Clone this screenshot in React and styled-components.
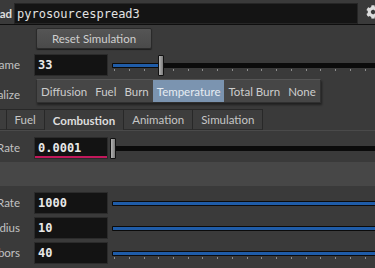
import React from 'react';
import styled, { createGlobalStyle } from 'styled-components';
import { FaCog } from 'react-icons/fa';

const GlobalStyle = createGlobalStyle`
  html, body {
    margin: 0;
    padding: 0;
    background: #3a3a3a;
    overflow: hidden;
  }
  body {
    font-family: Lato, 'Liberation Sans', sans-serif;
    font-size: 11.5px;
    color: #c8c8c8;
  }
`;

const Pane = styled.div`
  width: 375px;
  height: 268px;
  overflow: hidden;
  background: #3a3a3a;
  display: flex;
  flex-direction: column;
`;

const Header = styled.div`
  display: flex;
  align-items: flex-start;
  height: 25px;
  padding-top: 3px;
  box-sizing: border-box;
  border-bottom: 1px solid #0e0e0e;
  flex-shrink: 0;
`;

const Label = styled.div`
  width: ${p => p.$width || 20}px;
  flex-shrink: 0;
  display: flex;
  justify-content: flex-end;
  align-items: center;
  height: 21px;
  overflow: hidden;
  white-space: nowrap;
  color: ${p => (p.$bold ? '#dedede' : '#c2c2c2')};
  font-weight: ${p => (p.$bold ? 700 : 400)};
  margin-right: ${p => p.$gap ?? 14}px;
`;

const ChoiceLabel = styled(Label)`
  margin-bottom: -2px;
`;

const NameField = styled.div`
  width: 344px;
  height: 21px;
  box-sizing: border-box;
  background: #141414;
  border: 1px solid #262626;
  padding-left: 2px;
  display: flex;
  align-items: center;
  font-family: 'DejaVu Sans Mono', monospace;
  font-size: 12px;
  color: #e2e2e2;
  flex-shrink: 0;
`;

const Gear = styled.div`
  margin-left: 8px;
  margin-top: 2px;
  color: #dcdcdc;
  display: flex;
  flex-shrink: 0;
`;

const ButtonRow = styled.div`
  display: flex;
  padding: 3px 0 0 36px;
`;

const Button = styled.button`
  width: 116px;
  height: 21px;
  background: linear-gradient(#555555, #4a4a4a);
  border: 1px solid #2a2a2a;
  border-radius: 2px;
  box-shadow: 0 1px 1px rgba(0, 0, 0, 0.5);
  color: #cfcfcf;
  font-family: Lato, 'Liberation Sans', sans-serif;
  font-size: 11.5px;
  padding: 0;
`;

const Row = styled.div`
  display: flex;
  align-items: flex-start;
  height: 22px;
  margin-top: ${p => p.$top || 0}px;
  flex-shrink: 0;
`;

const ChoiceRow = styled.div`
  display: flex;
  align-items: flex-end;
  flex-shrink: 0;
`;

const Field = styled.div`
  width: 74px;
  height: 22px;
  box-sizing: border-box;
  flex-shrink: 0;
  background: #131313;
  border: 1px solid #2b2b2b;
  padding-left: 3px;
  display: flex;
  align-items: center;
  font-family: 'DejaVu Sans Mono', monospace;
  font-weight: 700;
  font-size: 12px;
  color: #e8e8e8;
  box-shadow: ${p => (p.$accent ? 'inset 0 -2px 0 #c2185b' : 'none')};
`;

const Slider = styled.div`
  position: relative;
  width: 300px;
  height: 22px;
  margin-left: 4px;
  flex-shrink: 0;
`;

const Track = styled.div`
  position: absolute;
  left: 0;
  right: 0;
  top: 9px;
  height: 5px;
  background: #0b0b0b;
  border-radius: 1px;
`;

const Fill = styled.div`
  position: absolute;
  left: 1px;
  top: 1px;
  bottom: 1px;
  background: #1f5ca8;
`;

const Ticks = styled.div`
  position: absolute;
  left: 2px;
  right: 0;
  top: 15px;
  height: 2px;
  background: repeating-linear-gradient(to right, #8c8c8c 0 1px, transparent 1px 14.75px);
`;

const Handle = styled.div`
  position: absolute;
  top: 1px;
  width: 6px;
  height: 21px;
  box-sizing: border-box;
  border: 1px solid #111;
  border-radius: 1px;
  background: linear-gradient(to right, #b4b4b4, #7c7c7c);
`;

const Strip = styled.div`
  display: flex;
  height: 24px;
  margin: 3px 0 0 2px;
  box-sizing: border-box;
  background: #464646;
  border: 1px solid #303030;
  border-top-color: #555;
  box-shadow: 1px 2px 2px rgba(0, 0, 0, 0.45);
  flex-shrink: 0;
`;

const Choice = styled.div`
  display: flex;
  align-items: center;
  padding: 0 4px;
  color: ${p => (p.$on ? '#e6ecf3' : '#cdcdcd')};
  background: ${p => (p.$on ? '#7b94b0' : 'transparent')};
`;

const Tabs = styled.div`
  display: flex;
  height: 21px;
  margin: 6px 0 0 -46px;
  flex-shrink: 0;
`;

const Tab = styled.div`
  display: flex;
  align-items: center;
  padding: 0 8px;
  box-sizing: border-box;
  border: 1px solid #282828;
  border-bottom: ${p => (p.$on ? 'none' : '1px solid #2c2c2c')};
  margin-right: -1px;
  background: ${p => (p.$on ? '#3b3b3b' : '#3d3d3d')};
  color: ${p => (p.$on ? '#dedede' : '#c6c6c6')};
  font-weight: ${p => (p.$on ? 700 : 400)};
`;

const Panel = styled.div`
  display: flex;
  flex-direction: column;
  border-top: 1px solid #4a4a4a;
  padding-top: 6px;
`;

const Band = styled.div`
  height: 24px;
  margin-top: 3px;
  background: #474747;
  flex-shrink: 0;
`;

const ParmSlider = ({ fill, handle, ticks }) => (
  <Slider>
    <Track>{fill != null && <Fill style={{ width: fill }} />}</Track>
    {ticks && <Ticks />}
    {handle != null && <Handle style={{ left: handle }} />}
  </Slider>
);

const choices = ['Diffusion', 'Fuel', 'Burn', 'Temperature', 'Total Burn', 'None'];
const tabs = ['Source', 'Fuel', 'Combustion', 'Animation', 'Simulation'];

const lower = [
  { label: 'Spread Rate', value: '1000', top: 6 },
  { label: 'Search Radius', value: '10', top: 3 },
  { label: 'Max Neighbors', value: '40', top: 3, ticks: true },
];

export default function App() {
  return (
    <>
      <GlobalStyle />
      <Pane>
        <Header>
          <Label $width={12} $gap={2} $bold>Pyro Source Spread</Label>
          <NameField>pyrosourcespread3</NameField>
          <Gear><FaCog size={14} /></Gear>
        </Header>
        <ButtonRow>
          <Button>Reset Simulation</Button>
        </ButtonRow>
        <Row $top={5}>
          <Label>Start Frame</Label>
          <Field>33</Field>
          <ParmSlider fill={46} handle={46} ticks />
        </Row>
        <ChoiceRow>
          <ChoiceLabel>Visualize</ChoiceLabel>
          <Strip>
            {choices.map(c => (
              <Choice key={c} $on={c === 'Temperature'}>{c}</Choice>
            ))}
          </Strip>
        </ChoiceRow>
        <Tabs>
          {tabs.map(t => (
            <Tab key={t} $on={t === 'Combustion'}>{t}</Tab>
          ))}
        </Tabs>
        <Panel>
          <Row>
            <Label>Burn Rate</Label>
            <Field $accent>0.0001</Field>
            <ParmSlider handle={-2} />
          </Row>
          <Band />
          {lower.map(r => (
            <Row key={r.label} $top={r.top}>
              <Label>{r.label}</Label>
              <Field>{r.value}</Field>
              <ParmSlider fill={320} ticks={r.ticks} />
            </Row>
          ))}
        </Panel>
      </Pane>
    </>
  );
}
